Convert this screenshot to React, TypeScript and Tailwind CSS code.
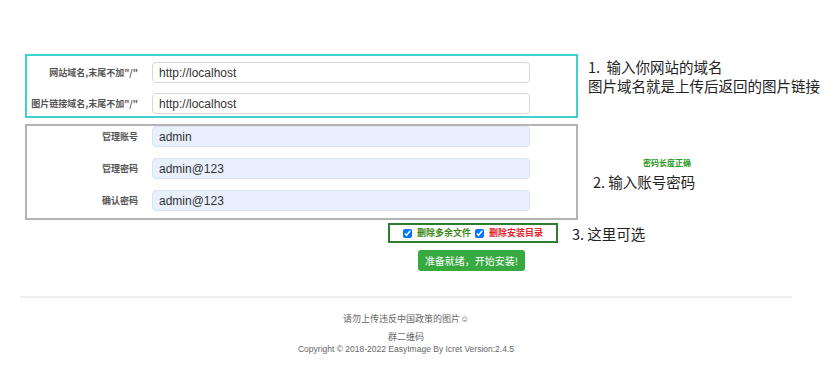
import React from "react";

const cjk = "font-['Microsoft_YaHei','Noto_Sans_CJK_SC',sans-serif]";

function Field({ label, value, filled }: { label: string; value: string; filled?: boolean }) {
    return (
        <div className="flex items-center">
            <label className="w-[111px] shrink-0 whitespace-nowrap text-right text-[9px] font-bold text-[#555]">
                {label}
            </label>
            <input
                readOnly
                value={value}
                className={
                    "ml-[14px] h-[21px] w-[378px] rounded-[4px] border px-[6px] text-[12px] text-[#333] outline-none font-['Liberation_Sans',sans-serif] " +
                    (filled ? "border-[#dde3ee] bg-[#e8f0fe]" : "border-[#d6d6d6] bg-white")
                }
            />
        </div>
    );
}

export default function App() {
    return (
        <div className={`min-h-[369px] w-[830px] bg-white ${cjk}`}>
            <div className="ml-[20px] flex w-[772px] flex-col pt-[54px]">
                {/* site + image domain */}
                <div className="flex items-start">
                    <div className="ml-[5px] flex h-[64px] w-[553px] shrink-0 flex-col gap-[10px] border-2 border-[#3fd3cf] pt-[6px]">
                        <Field label={'网站域名,末尾不加"/"'} value="http://localhost" />
                        <Field label={'图片链接域名,末尾不加"/"'} value="http://localhost" />
                    </div>
                    <div className="ml-[10px] mt-[3px] whitespace-nowrap text-[14.5px] leading-[19px] text-[#222]">
                        <p>1.&nbsp; 输入你网站的域名</p>
                        <p>图片域名就是上传后返回的图片链接</p>
                    </div>
                </div>

                {/* admin account */}
                <div className="mt-[6px] flex items-start">
                    <div className="ml-[5px] flex h-[96px] w-[553px] shrink-0 flex-col gap-[11px] border-2 border-[#b4b4b4]">
                        <Field label="管理账号" value="admin" filled />
                        <Field label="管理密码" value="admin@123" filled />
                        <Field label="确认密码" value="admin@123" filled />
                    </div>
                    <div className="mt-[34px] flex flex-col whitespace-nowrap">
                        <span className="ml-[65px] text-[8px] font-bold leading-[10px] text-[#2a9a1a]">密码长度正确</span>
                        <span className="ml-[15px] mt-[4px] text-[14.5px] leading-[19px] text-[#222]">2. 输入账号密码</span>
                    </div>
                </div>

                {/* optional cleanup */}
                <div className="mt-[3px] flex items-center">
                    <div className="ml-[368px] flex h-[20px] w-[170px] shrink-0 items-center whitespace-nowrap border-2 border-[#2f7d2f] pl-[13px] text-[9px] font-bold">
                        <input type="checkbox" checked readOnly className="m-0 h-[9px] w-[9px]" />
                        <span className="ml-[5px] text-[#3b8a12]">删除多余文件</span>
                        <input type="checkbox" checked readOnly className="m-0 ml-[4px] h-[9px] w-[9px]" />
                        <span className="ml-[5px] text-[#e3262e]">删除安装目录</span>
                    </div>
                    <span className="ml-[14px] whitespace-nowrap text-[14.5px] leading-[19px] text-[#222]">3. 这里可选</span>
                </div>

                <button className="ml-[398px] mt-[7px] h-[21px] w-[107px] rounded-[3px] bg-[#36a940] text-[10px] text-white">
                    准备就绪，开始安装!
                </button>

                <hr className="mt-[25px] border-t-2 border-[#eeeeee]" />

                <footer className="mt-[14px] flex flex-col items-center text-[9px] text-[#666]">
                    <p className="leading-[13px]">请勿上传违反中国政策的图片☺</p>
                    <p className="mt-[5px] leading-[13px]">群二维码</p>
                    <p className="leading-[13px] font-['Liberation_Sans',sans-serif] text-[8.5px]">
                        Copyright © 2018-2022 EasyImage By Icret Version:2.4.5
                    </p>
                </footer>
            </div>
        </div>
    );
}
